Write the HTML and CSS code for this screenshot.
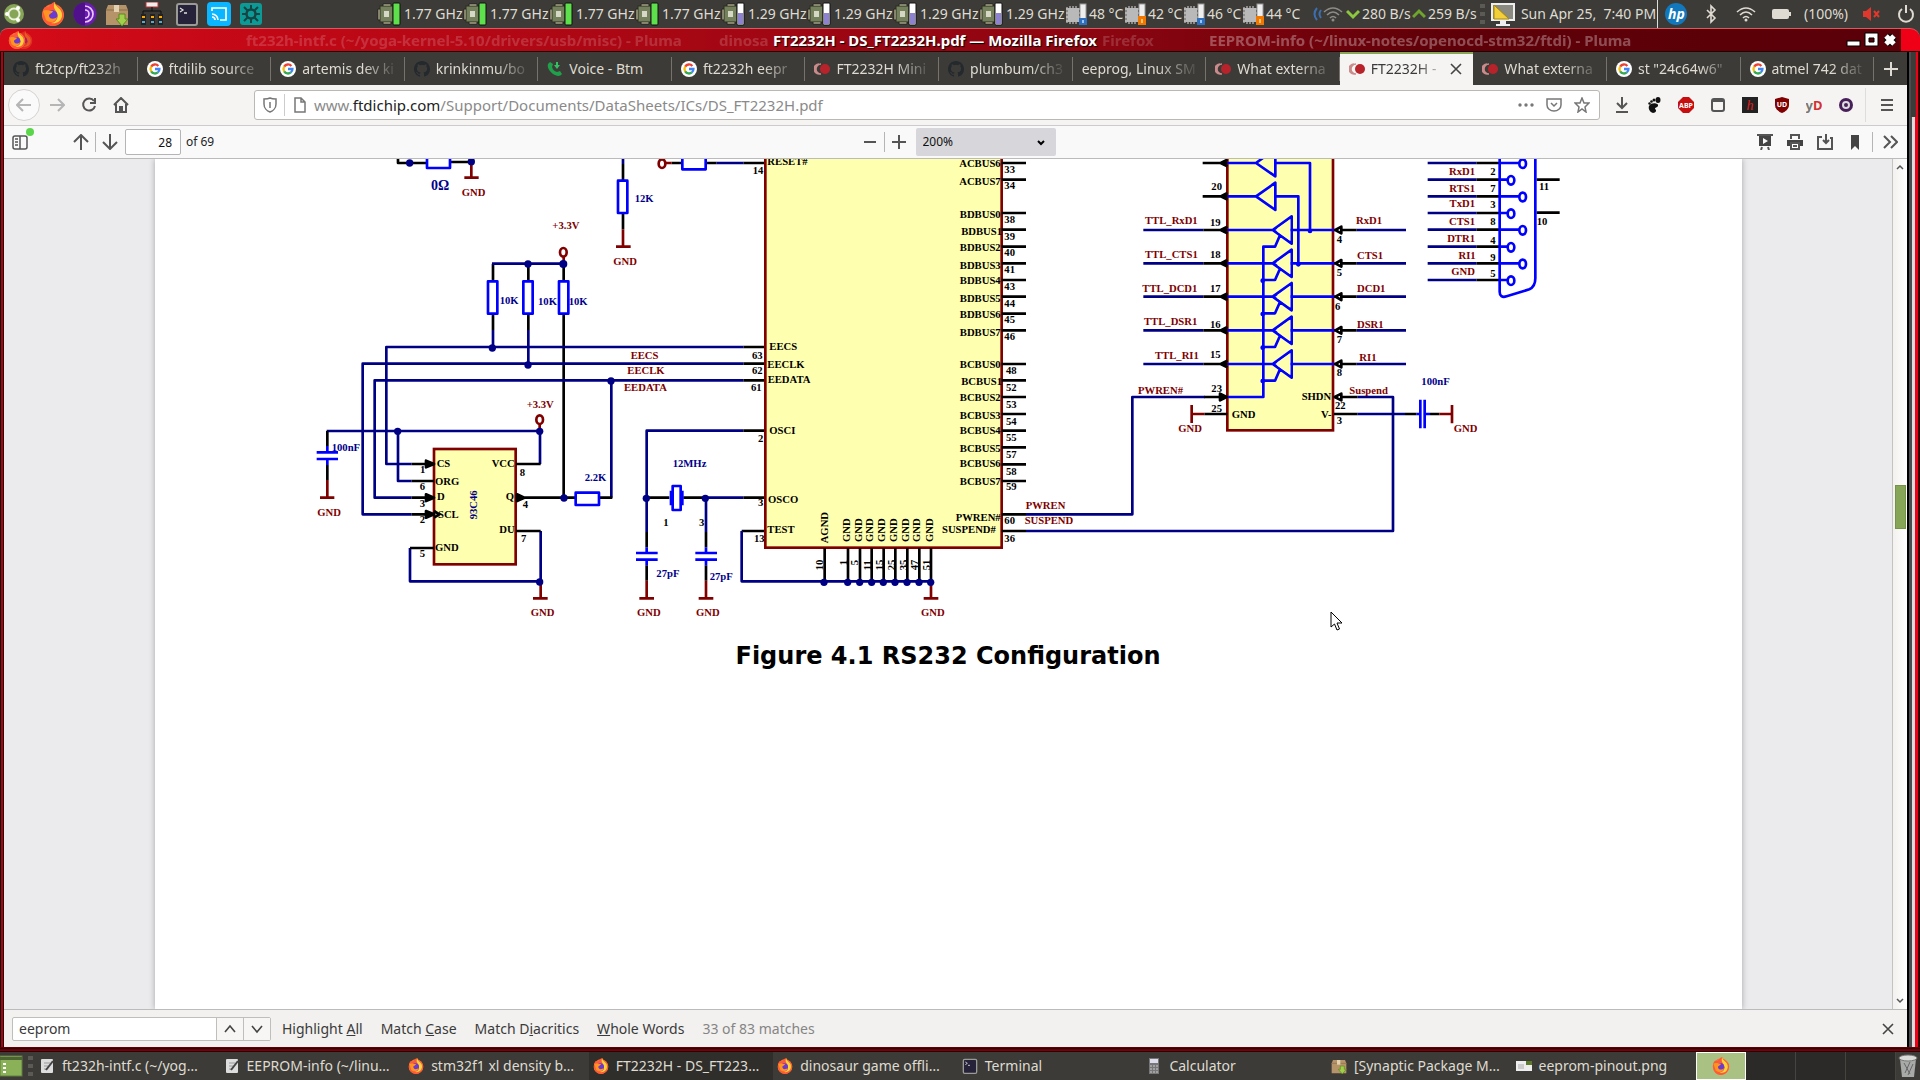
FILE: index.html
```html
<!DOCTYPE html>
<html lang="en">
<head>
<meta charset="utf-8">
<title>FT2232H - DS_FT2232H.pdf — Mozilla Firefox</title>
<link rel="stylesheet" href="styles.css">
</head>
<body>
<svg class="defs" aria-hidden="true">
  <defs>
    <symbol id="fox" viewBox="0 0 24 24"><circle cx="12" cy="13" r="11" fill="#ff7139"/><path d="M2 8C4 3 6 6 8 5C10 1 13 0 14 0C14 4 20 5 22 10C24 19 17 24 12 24C5 24 0 18 2 8Z" fill="#ff5a36"/><path d="M14 0C13 5 22 6 21 14C20 20 15 22 10 21C17 20 18 14 15 9C13 6 12 4 14 0Z" fill="#ffd43a"/><circle cx="11" cy="13.500" r="5.500" fill="#6a3bd0"/><path d="M2 9C5 7 8 9 12 9C11 12 8 11 8 14C9 18 14 17 16 15C15 21 8 21 5 18Z" fill="#ff9420"/></symbol>
    <symbol id="google" viewBox="0 0 18 18"><circle cx="9" cy="9" r="9" fill="#fff"/><g fill="none" stroke-width="2.600"><path d="M12.800 5.600A5 5 0 0 0 4.700 6.400" stroke="#ea4335"/><path d="M4.700 6.400A5 5 0 0 0 4.700 11.600" stroke="#fbbc05"/><path d="M4.700 11.600A5 5 0 0 0 12.200 12.900" stroke="#34a853"/><path d="M12.200 12.900A5 5 0 0 0 14 9H9" stroke="#4285f4"/></g></symbol>
    <symbol id="github" viewBox="0 0 16 16"><path fill="#24292e" d="M8 0C3.580 0 0 3.580 0 8c0 3.540 2.290 6.530 5.470 7.590.4.070.55-.17.55-.38v-1.490c-2.010.37-2.530-.49-2.690-.94-.09-.23-.48-.94-.82-1.130-.28-.15-.68-.52-.01-.53.63-.01 1.080.58 1.230.82.72 1.210 1.870.87 2.330.66.070-.52.28-.87.51-1.070-1.780-.2-3.640-.89-3.640-3.950 0-.87.31-1.590.82-2.150-.08-.2-.36-1.020.08-2.120 0 0 .67-.21 2.200.82a7.600 7.600 0 0 1 4 0c1.530-1.040 2.200-.82 2.200-.82.44 1.100.16 1.920.08 2.120.51.56.82 1.270.82 2.150 0 3.070-1.870 3.750-3.650 3.950.29.25.54.73.54 1.480v2.200c0 .21.15.46.55.38A8 8 0 0 0 16 8c0-4.420-3.580-8-8-8z"/></symbol>
    <symbol id="voice" viewBox="0 0 16 16"><path d="M3 1L6 3L5 6C6 9 7 10 10 11L13 10L15 13C13 16 9 15 6 13C2 10 0 6 1 3Z" fill="#1fa04a"/><path d="M9 1V4H7L10 8L13 4H11V1ZM12 5L15 9" fill="#35c063"/></symbol>
    <symbol id="mouser" viewBox="0 0 16 12"><path d="M5 1A5 5 0 0 0 5 11M3 2A5 5 0 0 0 3 10M7 1A5 5 0 0 0 7 11" fill="none" stroke="#c98b8b" stroke-width="1.500"/><circle cx="11" cy="6" r="5" fill="#b8232b"/></symbol>
    <symbol id="cpu" viewBox="0 0 24 24"><path d="M6 2H14V22H6ZM1 7H18V18H1Z" fill="#e6e2b8" stroke="#222" /><rect x="3" y="4" width="13" height="16" fill="#75805c" stroke="#2b2f20"/><rect x="7" y="9" width="5" height="6" fill="#d5d8c4"/></symbol>
    <symbol id="cpu-high" viewBox="0 0 24 24"><use href="#cpu"/><rect x="16" y="1" width="7" height="22" rx="1" fill="#5ee04c" stroke="#111"/></symbol>
    <symbol id="cpu-low" viewBox="0 0 24 24"><use href="#cpu"/><rect x="16" y="1" width="7" height="22" rx="1" fill="#fff" stroke="#111"/><path d="M17 11H22V22H17Z" fill="#8d82d0"/></symbol>
    <symbol id="chip" viewBox="0 0 24 24"><path d="M2 5V21M5 4V22M8 4V22M11 4V22M1 7H15M1 11H15M1 15H15M1 19H15" stroke="#ddd"/><rect x="3" y="6" width="11" height="14" fill="#b9b9b9"/><rect x="15" y="2" width="6" height="20" fill="#eee" stroke="#999"/></symbol>
    <symbol id="temp-cool" viewBox="0 0 24 24"><use href="#chip"/><path d="M14 16H22V23H14Z" fill="#2f6fc0"/><path d="M17 18H19V21H17Z" fill="#9cc4f0"/></symbol>
    <symbol id="temp-warm" viewBox="0 0 24 24"><use href="#chip"/><path d="M14 14H22V23H14Z" fill="#f07800"/><path d="M17 17H19V21H17Z" fill="#ffc070"/></symbol>
    <symbol id="wifi" viewBox="0 0 20 16"><g fill="none" stroke="currentColor" stroke-width="1.600"><path d="M1 6Q10 -2 19 6M4 9Q10 3 16 9M7 12Q10 9 13 12"/></g><circle cx="10" cy="14" r="1.500" fill="currentColor"/></symbol>
    <symbol id="doc" viewBox="0 0 16 16"><rect x="2" y="1" width="12" height="14" rx="1" fill="#ddd"/><path d="M5 5H11M5 8H9M5 11H8" stroke="#999"/><path d="M7 12L14 3" stroke="#444" stroke-width="2"/></symbol>
    <symbol id="package" viewBox="0 0 24 24"><path d="M3 3H21L23 8V23H1V8Z" fill="#b5946a"/><path d="M1 8H23" stroke="#8b6c48"/><path d="M9 3H14V10H9Z" fill="#e3d1b0"/><path d="M14 12H20V17H23L17 24L11 17H14Z" fill="#9fcf4b" stroke="#5a8a1c"/></symbol>
    <symbol id="term" viewBox="0 0 24 24"><rect x="2" y="2" width="20" height="21" rx="2" fill="#25223a" stroke="#9a9a96" stroke-width="2"/><path d="M5 6L8 8L5 10M9 11H12" fill="none" stroke="#ddd" stroke-width="1.300"/></symbol>
  </defs>
</svg>

<header class="panel">
  <nav class="launchers" aria-label="Launchers">
    <svg class="i24" viewBox="0 0 24 24"><circle cx="12" cy="12" r="10" fill="#87a556"/><circle cx="12" cy="12" r="5.500" fill="none" stroke="#e8f0d8" stroke-width="2"/><circle cx="5" cy="12" r="2" fill="#fff"/><circle cx="16" cy="6" r="2" fill="#fff"/><circle cx="16" cy="18" r="2" fill="#fff"/></svg>
    <svg class="i24 push"><use href="#fox"/></svg>
    <svg class="i24" viewBox="0 0 24 24"><circle cx="12" cy="12" r="11.500" fill="#6a1bb0"/><path d="M12 4A8 8 0 0 1 12 20M12 8A4 4 0 0 1 12 16" fill="none" stroke="#e7c9ff" stroke-width="1.700"/><path d="M12 .5A11.500 11.500 0 0 0 12 23.500Z" fill="#50108c"/></svg>
    <svg class="i24"><use href="#package"/></svg>
    <svg class="i24 wide" viewBox="0 0 24 24"><rect x="6" y="0" width="12" height="5" fill="#eee" stroke="#b33"/><path d="M12 5V9M3 12V9H21V12" stroke="#111" fill="none"/><path d="M1 12H6V23H1ZM10 12H15V23H10ZM18 12H23V23H18Z" fill="#222"/><path d="M2 15H5M11 15H14M19 15H22" stroke="#fa0" stroke-width="2"/><path d="M2 20H5M11 20H14M19 20H22" stroke="#5ac" stroke-width="2"/></svg>
    <svg class="i24"><use href="#term"/></svg>
    <svg class="i24" viewBox="0 0 24 24"><rect width="24" height="24" rx="4" fill="#0ab6ff"/><path d="M5 9V6H19V18H13M5 12A6 6 0 0 1 11 18M5 15A3 3 0 0 1 8 18" fill="none" stroke="#fff" stroke-width="1.700"/></svg>
    <svg class="i24" viewBox="0 0 24 24"><rect x="1" y="1" width="22" height="22" rx="3" fill="#0c9a96"/><circle cx="12" cy="12" r="4.500" fill="none" stroke="#164443" stroke-width="2.500"/><path d="M12 3V8M12 16V21M3 12H8M16 12H21M5 5L9 9M19 5L15 9M5 19L9 15M19 19L15 15" stroke="#164443" stroke-width="2"/></svg>
  </nav>
  <div class="meters">
    <span class="cpu"><svg class="i24"><use href="#cpu-high"/></svg>1.77 GHz</span>
    <span class="cpu"><svg class="i24"><use href="#cpu-high"/></svg>1.77 GHz</span>
    <span class="cpu"><svg class="i24"><use href="#cpu-high"/></svg>1.77 GHz</span>
    <span class="cpu"><svg class="i24"><use href="#cpu-high"/></svg>1.77 GHz</span>
    <span class="cpu"><svg class="i24"><use href="#cpu-low"/></svg>1.29 GHz</span>
    <span class="cpu"><svg class="i24"><use href="#cpu-low"/></svg>1.29 GHz</span>
    <span class="cpu"><svg class="i24"><use href="#cpu-low"/></svg>1.29 GHz</span>
    <span class="cpu"><svg class="i24"><use href="#cpu-low"/></svg>1.29 GHz</span>
    <span class="temp"><svg class="i24"><use href="#temp-cool"/></svg>48 °C</span>
    <span class="temp"><svg class="i24"><use href="#temp-warm"/></svg>42 °C</span>
    <span class="temp"><svg class="i24"><use href="#temp-cool"/></svg>46 °C</span>
    <span class="temp"><svg class="i24"><use href="#temp-warm"/></svg>44 °C</span>
    <span class="net first"><svg class="netwifi" viewBox="0 0 32 20"><path d="M5 4Q0 10 5 16M9 6Q6 10 9 14" fill="none" stroke="#3c6fb0" stroke-width="2"/><use href="#wifi" x="11" y="2" width="20" height="16"/></svg><svg class="arr" viewBox="0 0 14 12"><path d="M1 3L7 9L13 3" fill="none" stroke="#8dc63f" stroke-width="3"/></svg>280 B/s</span>
    <span class="net"><svg class="arr" viewBox="0 0 14 12"><path d="M1 9L7 3L13 9" fill="none" stroke="#6fa52c" stroke-width="3"/></svg>259 B/s</span>
    <i class="grip"></i>
    <svg class="i24" viewBox="0 0 24 24"><rect x="1" y="2" width="22" height="16" fill="#8a8a80" stroke="#eee" stroke-width="2"/><path d="M3 3V17H18Z" fill="#f3cf3a" stroke="#a8860c"/><path d="M9 19H15V22H19V24H5V22H9Z" fill="#eee"/></svg>
    <time class="clock">Sun Apr 25,&nbsp; 7:40 PM</time>
  </div>
  <div class="tray">
    <svg class="i24" viewBox="0 0 24 24"><circle cx="12" cy="12" r="11" fill="#1178bd"/><text class="hp" x="4" y="17">hp</text></svg>
    <svg class="i24" viewBox="0 0 24 24"><path d="M8 8L16 16L12 20V4L16 8L8 16" fill="none" stroke="#dfdbd2" stroke-width="1.600"/></svg>
    <svg class="i24" viewBox="-2 -4 24 24"><use href="#wifi" width="20" height="16"/></svg>
    <svg class="i24" viewBox="0 0 24 24"><rect x="3" y="7" width="17" height="10" rx="2" fill="#dfdbd2"/><rect x="20" y="10" width="2" height="4" fill="#dfdbd2"/></svg>
    <span>(100%)</span>
    <svg class="i24" viewBox="0 0 24 24"><path d="M4 9H7L12 5V19L7 15H4Z" fill="#e0382c"/><path d="M15 9L20 15M20 9L15 15" stroke="#e0382c" stroke-width="2"/></svg>
    <svg class="i24" viewBox="0 0 24 24"><path d="M8 7A7 7 0 1 0 16 7M12 3V11" fill="none" stroke="#dfdbd2" stroke-width="2"/></svg>
  </div>
</header>

<div class="titlebar">
  <svg class="ghostfox" width="18" height="18"><use href="#fox"/></svg>
  <svg class="appicon" width="18" height="18"><use href="#fox"/></svg>
  <span class="ghost g1">ft232h-intf.c (~/yoga-kernel-5.10/drivers/usb/misc) - Pluma</span>
  <span class="ghost g2">dinosa</span>
  <span class="ghost g3">Firefox</span>
  <span class="ghost g4">EEPROM-info (~/linux-notes/openocd-stm32/ftdi) - Pluma</span>
  <h1>FT2232H - DS_FT2232H.pdf — Mozilla Firefox</h1>
  <div class="winbtns">
    <button aria-label="Minimize"><svg width="16" height="16" viewBox="0 0 16 16"><rect x="1" y="9" width="13" height="5" fill="#fff" stroke="#000"/></svg></button>
    <button aria-label="Maximize"><svg width="16" height="16" viewBox="0 0 16 16"><path d="M1 1H14V14H1ZM5 6V10H10V6Z" fill="#fff" stroke="#000" fill-rule="evenodd"/></svg></button>
    <button aria-label="Close window"><svg width="16" height="16" viewBox="0 0 16 16"><path d="M4 4L12 12M12 4L4 12" stroke="#000" stroke-width="7"/><path d="M4 4L12 12M12 4L4 12" stroke="#fff" stroke-width="5"/></svg></button>
  </div>
</div>

<div class="frame">
<main class="window">
  <div class="tabs">
    <a class="tab" href="#"><svg><use href="#github"/></svg><span>ft2tcp/ft232h</span></a>
    <a class="tab" href="#"><svg><use href="#google"/></svg><span>ftdilib source</span></a>
    <a class="tab" href="#"><svg><use href="#google"/></svg><span>artemis dev ki</span></a>
    <a class="tab" href="#"><svg><use href="#github"/></svg><span>krinkinmu/bo</span></a>
    <a class="tab" href="#"><svg><use href="#voice"/></svg><span class="whole">Voice - Btm</span></a>
    <a class="tab" href="#"><svg><use href="#google"/></svg><span>ft2232h eepr</span></a>
    <a class="tab" href="#"><svg><use href="#mouser"/></svg><span>FT2232H Mini</span></a>
    <a class="tab" href="#"><svg><use href="#github"/></svg><span>plumbum/ch3</span></a>
    <a class="tab" href="#"><span>eeprog, Linux SM</span></a>
    <a class="tab" href="#"><svg><use href="#mouser"/></svg><span>What externa</span></a>
    <a class="tab active" href="#"><svg><use href="#mouser"/></svg><span>FT2232H -</span><svg class="x" viewBox="0 0 14 14"><path d="M2 2L12 12M12 2L2 12" stroke="#444" stroke-width="1.600"/></svg></a>
    <a class="tab" href="#"><svg><use href="#mouser"/></svg><span>What externa</span></a>
    <a class="tab" href="#"><svg><use href="#google"/></svg><span>st "24c64w6"</span></a>
    <a class="tab" href="#"><svg><use href="#google"/></svg><span>atmel 742 dat</span></a>
    <button class="newtab" aria-label="New tab"><svg width="16" height="16" viewBox="0 0 16 16"><path d="M8 1V15M1 8H15" stroke="#dfdbd2" stroke-width="2"/></svg></button>
  </div>

  <div class="navbar">
    <div class="navbtns">
      <button class="back" aria-label="Back"><svg viewBox="0 0 16 16"><path d="M15 8H1M7 2L1 8L7 14"/></svg></button>
      <button class="dim" aria-label="Forward"><svg viewBox="0 0 16 16"><path d="M1 8H15M9 2L15 8L9 14"/></svg></button>
      <button aria-label="Reload"><svg viewBox="0 0 16 16"><path d="M13 4A6 6 0 1 0 14 9M14 1V6H9"/></svg></button>
      <button aria-label="Home"><svg viewBox="0 0 16 16"><path d="M1 8L8 1L15 8M3 7V15H13V7M7 15V10H9V15"/></svg></button>
    </div>
    <div class="urlbar">
      <svg viewBox="0 0 16 16" class="ic"><path d="M8 1C10 2 12 2 14 2V7C14 11 11 14 8 15C5 14 2 11 2 7V2C4 2 6 2 8 1ZM8 5V11"/></svg>
      <i></i>
      <svg viewBox="0 0 16 16" class="ic"><path d="M3 1H9L13 5V15H3ZM9 1V5H13"/></svg>
      <div class="url" role="textbox" aria-label="Address">www.<b>ftdichip.com</b>/Support/Documents/DataSheets/ICs/DS_FT2232H.pdf</div>
      <svg viewBox="0 0 16 16" class="ic"><g fill="#777" stroke="none"><circle cx="2" cy="8" r="1.700"/><circle cx="8" cy="8" r="1.700"/><circle cx="14" cy="8" r="1.700"/></g></svg>
      <svg viewBox="0 0 16 16" class="ic"><path d="M1 2H15V8A7 6 0 0 1 1 8ZM5 6L8 9L11 6"/></svg>
      <svg viewBox="0 0 16 16" class="ic"><path d="M8 1L10 6L15 6L11 10L12 15L8 12L4 15L5 10L1 6L6 6Z"/></svg>
    </div>
    <div class="exts">
      <button aria-label="Downloads"><svg viewBox="0 0 16 16"><path d="M8 0V11M3 6L8 11L13 6M2 15H14"/></svg></button>
      <button aria-label="GNOME Shell"><svg viewBox="0 0 16 16"><g fill="#111" stroke="none"><ellipse cx="12" cy="3" rx="2.500" ry="3"/><circle cx="8" cy="3" r="1.500"/><circle cx="5.500" cy="4.500" r="1.300"/><circle cx="3.500" cy="6.500" r="1.200"/><path d="M3 9C5 5 13 6 12 9C11 11 9 10 9 12C11 13 10 16 7 16C4 15 2 12 3 9Z"/></g></svg></button>
      <button aria-label="Adblock Plus"><svg viewBox="0 0 16 16"><path d="M5 0H11L16 5V11L11 16H5L0 11V5Z" fill="#c70d0d" stroke="none"/><text class="abp" x="8" y="11">ABP</text></svg></button>
      <button aria-label="Container"><svg viewBox="0 0 16 16"><rect x="2" y="2" width="12" height="12" rx="2"/><path d="M2 4H14"/></svg></button>
      <button aria-label="Hypothesis"><svg viewBox="0 0 16 16"><rect width="16" height="16" fill="#222" stroke="none"/><text class="hext" x="8" y="13">h</text></svg></button>
      <button aria-label="uBlock Origin"><svg viewBox="0 0 16 16"><path d="M8 0L15 2V8C15 12 11 15 8 16C5 15 1 12 1 8V2Z" fill="#800000" stroke="none"/><text class="ub" x="8" y="10">UD</text></svg></button>
      <button aria-label="yD"><svg viewBox="0 0 16 16"><text class="yd" x="8" y="13">y<tspan fill="#d43030">D</tspan></text></svg></button>
      <button aria-label="Tor"><svg viewBox="0 0 16 16"><circle cx="8" cy="8" r="7" fill="#47205a" stroke="none"/><circle cx="8" cy="8" r="3" stroke="#ddd"/></svg></button>
    </div>
    <button class="menu" aria-label="Menu"><svg viewBox="0 0 16 16"><path d="M2 3H14M2 8H14M2 13H14"/></svg></button>
  </div>

  <div class="pdfbar">
    <div class="left">
      <button class="side" aria-label="Toggle sidebar"><svg viewBox="0 0 16 16"><rect x="1" y="2" width="14" height="13" rx="2"/><path d="M8 2V15M3 5H6M3 8H6M3 11H6"/></svg><em></em></button>
      <button aria-label="Previous page"><svg viewBox="0 0 16 16"><path d="M8 16V1M1 8L8 1L15 8"/></svg></button>
      <i></i>
      <button aria-label="Next page"><svg viewBox="0 0 16 16"><path d="M8 0V15M1 8L8 15L15 8"/></svg></button>
      <input class="pageno" type="text" value="28" aria-label="Page">
      <span>of 69</span>
    </div>
    <div class="mid">
      <button aria-label="Zoom out"><svg viewBox="0 0 16 16"><path d="M2 8H14"/></svg></button>
      <i></i>
      <button aria-label="Zoom in"><svg viewBox="0 0 16 16"><path d="M1 8H15M8 1V15"/></svg></button>
      <div class="zoom"><select aria-label="Zoom"><option>200%</option></select><svg viewBox="0 0 8 6"><path d="M1 1L4 4L7 1" fill="none" stroke="#000" stroke-width="2"/></svg></div>
    </div>
    <div class="right">
      <button aria-label="Presentation mode"><svg viewBox="0 0 16 16"><path d="M0 1H16M4 16L5 13M12 16L11 13"/><path d="M2 2H14V12H2ZM6 4V10L11 7Z" fill="#444" stroke="none" fill-rule="evenodd"/></svg></button>
      <button aria-label="Print"><svg viewBox="0 0 16 16"><path d="M4 5V1H12V5"/><path d="M0 6H16V12H0Z" fill="#444" stroke="none"/><path d="M4 9H12V15H4Z" fill="#fff"/><path d="M6 12H10"/></svg></button>
      <button aria-label="Save"><svg viewBox="0 0 16 16"><path d="M5 3H1V15H15V4H13M9 0V9M6 6L9 9L12 6"/></svg></button>
      <button aria-label="Bookmark"><svg viewBox="0 0 16 16"><path d="M4 1H12V16L8 12L4 16Z" fill="#444" stroke="none"/></svg></button>
      <i></i>
      <button aria-label="Tools"><svg viewBox="0 0 16 16"><path d="M2 2L8 8L2 14M9 2L15 8L9 14"/></svg></button>
    </div>
  </div>

  <div class="viewer">
    <div class="canvas">
      <figure class="sheet">
        <svg class="schematic" viewBox="465 477 4761 1428" role="img" aria-label="FT2232H RS232 schematic">
          <!-- pull-ups, reset and reference resistors -->
          <g transform="translate(900 450)">
            <path class="k" d="M294 20V39H380M450 36H514M969 42V92M969 190V238M1115 39H1146M1220 39H1250M1330 39H1400M579 341V392M685 341V392M791 341V392M579 494V540M685 494V540M791 494V1043M1330 591H1400M1330 641H1400M1330 691H1400"/>
            <path class="n" d="M969 20V42M1250 39H1330M576 341H790M579 540V594M685 540V645M1330 591H259V942H335M1330 641H188V1093H335M1330 691H224V1043H335M934 693V1043"/>
            <path class="m" d="M514 42V82M493 83H536M969 238V290M948 290H992M1098 39H1115M791 320V335"/>
            <path class="b" d="M381 20V54H450V20M1147 20V58H1217V20M954 92H982V189H954ZM564 394H592V491H564ZM670 394H698V491H670ZM777 394H805V491H777Z"/>
            <g class="m"><ellipse cx="1086" cy="41" rx="10" ry="13"/><ellipse cx="790" cy="307" rx="10" ry="13"/></g>
            <g class="dot"><circle cx="329" cy="39" r="11"/><circle cx="514" cy="35" r="11"/><circle cx="684" cy="342" r="11"/><circle cx="790" cy="342" r="12"/><circle cx="577" cy="594" r="11"/><circle cx="684" cy="645" r="11"/><circle cx="933" cy="693" r="11"/></g>
            <g class="tn"><text class="ohm" x="393" y="120">0Ω</text><text x="1004" y="157">12K</text><text x="599" y="461">10K</text><text x="714" y="464">10K</text><text x="806" y="464">10K</text></g>
            <g class="tm"><text x="485" y="137">GND</text><text x="940" y="345">GND</text><text x="757" y="237">+3.3V</text><text x="992" y="627">EECS</text><text x="982" y="671">EECLK</text><text x="972" y="722">EEDATA</text></g>
            <g class="tk"><text x="1358" y="72">14</text><text x="1356" y="626">63</text><text x="1356" y="671">62</text><text x="1353" y="722">61</text></g>
          </g>
          <!-- 93C46 EEPROM and crystal -->
          <g transform="translate(900 1140)">
            <rect class="ic-body" x="402" y="207" width="245" height="346"/>
            <path class="n" d="M80 153H720V252M294 153V303H335M330 504V604H722V453M1330 152H1040V456M1217 353H1330M1218 353V456"/>
            <path class="k" d="M82 153V198M82 255V300M335 252H402M335 303H402M335 353H402M335 403H402M330 504H402M648 252H722M648 453H722M648 353H825M900 353H937M1040 353H1108M1150 353H1217M1330 152H1400M1330 353H1400M1325 453H1400M1040 456V502M1218 456V502M1040 556V602M1218 556V602M378 242L402 252L378 262ZM378 343L402 353L378 363ZM378 393L402 403L378 413ZM402 393L418 403L402 413M651 343L673 353L651 363Z"/>
            <path class="m" d="M82 300V353M60 353H103M722 606V655M699 655H743M1040 602V655M1018 655H1062M1218 602V655M1196 655H1240M719 132V145"/>
            <path class="b" d="M82 198V217M50 217H114M50 237H114M82 237V255M827 338H897V375H827ZM1113 332V376M1118 318H1142V390H1118ZM1147 332V376M1040 502V519M1008 519H1073M1008 539H1073M1040 539V556M1218 502V519M1186 519H1251M1186 539H1251M1218 539V556"/>
            <g class="m"><ellipse cx="719" cy="119" rx="10" ry="13"/></g>
            <g class="dot"><circle cx="293" cy="154" r="11"/><circle cx="719" cy="154" r="11"/><circle cx="719" cy="606" r="11"/><circle cx="792" cy="354" r="11"/><circle cx="1039" cy="355" r="11"/><circle cx="1216" cy="355" r="11"/></g>
            <g class="tn"><text x="95" y="214">100nF</text><text x="854" y="303">2.2K</text><text x="1118" y="260">12MHz</text><text x="1069" y="592">27pF</text><text x="1229" y="600">27pF</text><text transform="translate(530 418) rotate(-90)">93C46</text></g>
            <g class="tm"><text x="52" y="407">GND</text><text x="692" y="707">GND</text><text x="1011" y="707">GND</text><text x="1188" y="707">GND</text><text x="680" y="84">+3.3V</text></g>
            <g class="tk"><text x="410" y="261">CS</text><text x="405" y="315">ORG</text><text x="411" y="361">D</text><text x="414" y="414">SCL</text><text x="405" y="513">GND</text><text x="575" y="261">VCC</text><text x="617" y="360">Q</text><text x="598" y="459">DU</text><text x="360" y="278">1</text><text x="359" y="329">6</text><text x="359" y="382">3</text><text x="359" y="429">2</text><text x="359" y="531">5</text><text x="659" y="287">8</text><text x="668" y="385">4</text><text x="663" y="485">7</text><text x="1090" y="437">1</text><text x="1197" y="437">3</text><text x="1374" y="186">2</text><text x="1374" y="378">3</text><text x="1362" y="486">13</text></g>
          </g>
          <!-- FT2232H body -->
          <g transform="translate(2190 450)">
            <rect class="ic-body" x="106" y="-40" width="709" height="1233"/>
            <path class="k" d="M815 39H888M815 89H888M815 189H888M815 239H888M815 290H888M815 340H888M815 390H888M815 440H888M815 491H888M815 541H888M815 642H888M815 691H888M815 741H888M815 792H888M815 842H888M815 892H888M815 943H888M815 993H888"/>
            <g class="tk end"><text x="812" y="51">ACBUS6</text><text x="812" y="105">ACBUS7</text><text x="812" y="204">BDBUS0</text><text x="816" y="255">BDBUS1</text><text x="812" y="303">BDBUS2</text><text x="812" y="357">BDBUS3</text><text x="812" y="402">BDBUS4</text><text x="812" y="456">BDBUS5</text><text x="812" y="504">BDBUS6</text><text x="812" y="558">BDBUS7</text><text x="812" y="654">BCBUS0</text><text x="816" y="704">BCBUS1</text><text x="812" y="753">BCBUS2</text><text x="812" y="807">BCBUS3</text><text x="812" y="852">BCBUS4</text><text x="812" y="906">BCBUS5</text><text x="812" y="951">BCBUS6</text><text x="812" y="1005">BCBUS7</text></g>
            <g class="tk"><text x="823" y="68">33</text><text x="823" y="116">34</text><text x="823" y="218">38</text><text x="823" y="270">39</text><text x="823" y="317">40</text><text x="823" y="368">41</text><text x="823" y="419">43</text><text x="823" y="471">44</text><text x="823" y="518">45</text><text x="823" y="570">46</text><text x="828" y="671">48</text><text x="828" y="722">52</text><text x="828" y="773">53</text><text x="828" y="825">54</text><text x="828" y="873">55</text><text x="828" y="924">57</text><text x="828" y="974">58</text><text x="828" y="1021">59</text><text x="112" y="46">RESET#</text><text x="118" y="600">EECS</text><text x="112" y="654">EECLK</text><text x="113" y="699">EEDATA</text></g>
          </g>
          <g transform="translate(2190 1140)">
            <path class="n" d="M35 453V604H602M888 403H1207V51H1425M888 453H1989V51H1882"/>
            <path class="k" d="M284 505V604M354 505V604M390 505V604M425 505V604M461 505V604M496 505V604M532 505V604M568 505V604M603 505V604M815 403H888M815 453H888"/>
            <path class="m" d="M603 606V655M581 655H625"/>
            <g class="dot"><circle cx="282" cy="607" r="11"/><circle cx="353" cy="607" r="11"/><circle cx="389" cy="607" r="11"/><circle cx="425" cy="607" r="11"/><circle cx="460" cy="607" r="11"/><circle cx="495" cy="607" r="11"/><circle cx="531" cy="607" r="11"/><circle cx="567" cy="607" r="11"/><circle cx="602" cy="607" r="11"/></g>
            <g class="tk"><text x="118" y="162">OSCI</text><text x="114" y="369">OSCO</text><text x="112" y="458">TEST</text><text x="677" y="422">PWREN#</text><text x="636" y="458">SUSPEND#</text><text x="823" y="431">60</text><text x="823" y="485">36</text>
              <text transform="translate(294 490) rotate(-90)">AGND</text><text transform="translate(359 486) rotate(-90)">GND</text><text transform="translate(395 486) rotate(-90)">GND</text><text transform="translate(428 486) rotate(-90)">GND</text><text transform="translate(464 486) rotate(-90)">GND</text><text transform="translate(500 486) rotate(-90)">GND</text><text transform="translate(536 486) rotate(-90)">GND</text><text transform="translate(571 486) rotate(-90)">GND</text><text transform="translate(608 486) rotate(-90)">GND</text>
              <text transform="translate(279 571) rotate(-90)">10</text><text transform="translate(351 556) rotate(-90)">1</text><text transform="translate(385 556) rotate(-90)">5</text><text transform="translate(423 571) rotate(-90)">11</text><text transform="translate(458 571) rotate(-90)">15</text><text transform="translate(494 571) rotate(-90)">25</text><text transform="translate(530 571) rotate(-90)">35</text><text transform="translate(565 571) rotate(-90)">47</text><text transform="translate(600 571) rotate(-90)">51</text></g>
            <g class="tm"><text x="887" y="387">PWREN</text><text x="884" y="431">SUSPEND</text><text x="573" y="707">GND</text></g>
          </g>
          <!-- RS232 level shifter -->
          <g transform="translate(3360 450)">
            <rect class="ic-body" x="322" y="-40" width="317" height="881"/>
            <path class="n" d="M70 240H250M70 340H250M70 440H250M70 541H250M70 642H250M710 240H858M710 340H858M710 440H858M710 541H858M710 642H858M712 792H855M923 39H1070M923 89H1070M923 139H1070M923 189H1070M923 239H1070M923 290H1070M923 340H1070M923 390H1070"/>
            <path class="b" d="M322 39H408M466 -3V79L408 39ZM466 39H570V243M322 139H408M466 98V180L408 139ZM466 139H535V343M322 240H515M515 199V281L458 240ZM322 340H515M515 299V381L458 340ZM322 440H515M515 399V481L458 440ZM322 541H515M515 500V582L458 541ZM322 642H515M515 601V683L458 642ZM515 240H645M515 340H645M515 440H645M515 541H645M515 642H645M322 741H430V290H465L480 256M430 390H465L480 356M430 490H465L480 456M430 591H465L480 557M430 692H465L480 658"/>
            <g class="bdot"><circle cx="570" cy="243" r="7"/><circle cx="535" cy="343" r="7"/><circle cx="428" cy="392" r="7"/><circle cx="428" cy="492" r="7"/><circle cx="428" cy="593" r="7"/><circle cx="428" cy="693" r="7"/></g>
            <g class="gap"><path d="M511 208V272L466 240ZM511 308V372L466 340ZM511 408V472L466 440ZM511 509V573L466 541ZM511 610V674L466 642Z"/></g>
            <path class="k" d="M248 39H322M248 139H322M250 240H322M250 340H322M250 440H322M250 541H322M250 642H322M253 741H322M253 792H322M664 240H710M664 340H710M664 440H710M664 541H710M664 642H710M664 741H712M642 792H712M855 792H890M930 792H958M322 29L302 39L322 49M322 129L302 139L322 149M322 230L302 240L322 250M322 330L302 340L322 350M322 430L302 440L322 450M322 531L302 541L322 551M322 632L302 642L322 652M300 731L320 741L300 751ZM664 230L646 240L664 250ZM664 330L646 340L664 350ZM664 430L646 440L664 450ZM664 531L646 541L664 551ZM664 632L646 642L664 652ZM664 731L644 741L664 751ZM1070 39H1139M1070 89H1139M1070 139H1139M1070 189H1139M1070 239H1139M1070 290H1139M1070 340H1139M1070 390H1139M1250 89H1319M1250 188H1319"/>
            <path class="m" d="M215 765V819M215 792H253M958 792H996M996 765V820"/>
            <path class="b" d="M890 792H901M901 749V835M914 749V835M914 792H930M1139 20V425Q1139 445 1160 439L1228 418Q1246 410 1246 385V20M1139 39H1197M1139 89H1162M1139 139H1197M1139 189H1162M1139 239H1197M1139 290H1162M1139 340H1197M1139 390H1162"/>
            <g class="b"><ellipse cx="1208" cy="41" rx="10" ry="13"/><ellipse cx="1173" cy="91" rx="10" ry="13"/><ellipse cx="1208" cy="141" rx="10" ry="13"/><ellipse cx="1173" cy="191" rx="10" ry="13"/><ellipse cx="1208" cy="241" rx="10" ry="13"/><ellipse cx="1173" cy="292" rx="10" ry="13"/><ellipse cx="1208" cy="342" rx="10" ry="13"/><ellipse cx="1173" cy="392" rx="10" ry="13"/></g>
            <g class="tm"><text x="75" y="223">TTL_RxD1</text><text x="75" y="323">TTL_CTS1</text><text x="67" y="425">TTL_DCD1</text><text x="72" y="524">TTL_DSR1</text><text x="105" y="626">TTL_RI1</text><text x="54" y="731">PWREN#</text><text x="175" y="845">GND</text><text x="708" y="223">RxD1</text><text x="711" y="326">CTS1</text><text x="711" y="426">DCD1</text><text x="711" y="533">DSR1</text><text x="718" y="632">RI1</text><text x="688" y="731">Suspend</text><text x="1001" y="845">GND</text></g>
            <g class="tm end"><text x="1065" y="75">RxD1</text><text x="1065" y="126">RTS1</text><text x="1065" y="172">TxD1</text><text x="1065" y="225">CTS1</text><text x="1065" y="276">DTR1</text><text x="1067" y="327">RI1</text><text x="1065" y="375">GND</text></g>
            <g class="tn"><text x="904" y="705">100nF</text></g>
            <g class="tk"><text x="274" y="119">20</text><text x="270" y="227">19</text><text x="270" y="324">18</text><text x="270" y="425">17</text><text x="270" y="533">16</text><text x="270" y="625">15</text><text x="274" y="725">23</text><text x="274" y="786">25</text><text x="335" y="803">GND</text><text x="545" y="749">SHDN</text><text x="603" y="803">V-</text><text x="645" y="776">22</text><text x="650" y="822">3</text><text x="650" y="278">4</text><text x="650" y="377">5</text><text x="645" y="479">6</text><text x="650" y="578">7</text><text x="650" y="677">8</text><text x="1111" y="75">2</text><text x="1111" y="126">7</text><text x="1111" y="174">3</text><text x="1111" y="225">8</text><text x="1111" y="281">4</text><text x="1111" y="332">9</text><text x="1111" y="381">5</text><text x="1257" y="119">11</text><text x="1250" y="224">10</text></g>
          </g>
        </svg>
        <figcaption>Figure 4.1 RS232 Configuration</figcaption>
      </figure>
    </div>
    <div class="scroll"><svg viewBox="0 0 8 6"><path d="M1 5L4 2L7 5"/></svg><div class="track"><b></b></div><svg viewBox="0 0 8 6"><path d="M1 1L4 4L7 1"/></svg></div>
  </div>

  <div class="findbar">
    <div class="findbox"><input type="text" value="eeprom" aria-label="Find in page"><button aria-label="Previous match"><svg viewBox="0 0 12 12"><path d="M1 9L6 3L11 9"/></svg></button><button aria-label="Next match"><svg viewBox="0 0 12 12"><path d="M1 3L6 9L11 3"/></svg></button></div>
    <button class="opt">Highlight <u>A</u>ll</button>
    <button class="opt">Match <u>C</u>ase</button>
    <button class="opt">Match D<u>i</u>acritics</button>
    <button class="opt"><u>W</u>hole Words</button>
    <span class="count">33 of 83 matches</span>
    <button class="close" aria-label="Close find bar"><svg viewBox="0 0 12 12"><path d="M1 1L11 11M11 1L1 11"/></svg></button>
  </div>
</main>
</div>

<footer class="taskbar">
  <button class="desk" aria-label="Show desktop"><svg width="24" height="24" viewBox="0 0 24 24"><rect x="0" y="2" width="22" height="20" fill="#8bb158" stroke="#5f7c3a"/><path d="M0 3H22V6H0Z" fill="#4d6334"/><path d="M3 10H6M3 14H6M3 18H6" stroke="#fff" stroke-width="2"/></svg></button>
  <i class="grip"></i>
  <div class="tasks">
    <button><svg><use href="#doc"/></svg><span>ft232h-intf.c (~/yog…</span></button>
    <button><svg><use href="#doc"/></svg><span>EEPROM-info (~/linu…</span></button>
    <button><svg><use href="#fox"/></svg><span>stm32f1 xl density b…</span></button>
    <button class="on"><svg><use href="#fox"/></svg><span>FT2232H - DS_FT223…</span></button>
    <button><svg><use href="#fox"/></svg><span>dinosaur game offli…</span></button>
    <button><svg><use href="#term"/></svg><span>Terminal</span></button>
    <button><svg viewBox="0 0 16 16"><rect x="3" y="0" width="10" height="16" fill="#777"/><rect x="4" y="1" width="8" height="4" fill="#dde"/><path d="M4 8H12M4 11H12M4 14H12" stroke="#ccc" stroke-dasharray="2 1"/></svg><span>Calculator</span></button>
    <button><svg><use href="#package"/></svg><span>[Synaptic Package M…</span></button>
    <button><svg viewBox="0 0 16 16"><rect y="3" width="16" height="10" fill="#eee"/><path d="M10 3H16V7H10Z" fill="#5a7a2a"/><path d="M2 6H8V11H2Z" fill="#ccc"/></svg><span>eeprom-pinout.png</span></button>
  </div>
  <div class="spaces"><span class="cur"><svg width="18" height="18"><use href="#fox"/></svg></span><span></span><span></span><span></span></div>
  <svg class="i24" viewBox="0 0 24 24"><path d="M4 5H20L18 23H6Z" fill="#a8aaa8"/><ellipse cx="12" cy="4" rx="9" ry="3" fill="#d8dad8" stroke="#777"/><path d="M8 9L14 20M14 8L9 19M17 10L12 21" stroke="#666"/></svg>
</footer>
<svg class="pointer" width="14" height="20" viewBox="0 0 14 20"><path d="M1 1V16L4.500 13L7 19L9.500 18L7 12H12Z" fill="#fff" stroke="#000"/></svg>
</body>
</html>
```
FILE: styles.css
```css
* { box-sizing: border-box; }
body {
  margin: 0;
  height: 100vh;
  display: flex;
  flex-direction: column;
  overflow: hidden;
  background: #3c3b37;
  color: #dfdbd2;
  font: 14px/20px "Noto Sans", sans-serif;
  white-space: nowrap;
}
button { font: inherit; color: inherit; background: none; border: 0; padding: 0; display: flex; align-items: center; justify-content: center; }
svg { display: block; flex: none; }
.defs { position: absolute; width: 0; height: 0; }
.i24 { width: 24px; height: 24px; }

/* top panel */
.panel { height: 28px; flex: none; display: flex; align-items: center; justify-content: space-between; }
.launchers { display: flex; align-items: center; gap: 8px; padding-left: 2px; }
.launchers .push { margin-left: 7px; }
.launchers .wide { margin: 0 3px; }
.meters { display: flex; align-items: center; flex: none; margin-left: auto; margin-right: 4px; }
.cpu, .temp, .net { display: flex; align-items: center; }
.cpu { width: 86px; gap: 3px; }
.temp { width: 59px; }
.net { width: 67px; gap: 2px; }
.net.first { width: 100px; margin-left: 11px; }
.netwifi { width: 32px; height: 20px; color: #8e8c86; }
.arr { width: 14px; height: 12px; }
.grip { width: 5px; height: 20px; margin: 0 6px 0 1px; background: repeating-linear-gradient(#5b5a55 0 4px, transparent 4px 8px); }
.clock { width: 132px; margin-left: 6px; }
.tray { display: flex; align-items: center; gap: 11px; flex: none; height: 28px; padding: 0 2px 0 6px; border-left: 1px solid #ddd; }
.hp { font: italic bold 14px "Noto Sans", sans-serif; fill: #fff; }

/* window decoration */
.titlebar {
  position: relative;
  height: 24px;
  flex: none;
  display: flex;
  align-items: center;
  justify-content: flex-end;
  padding-right: 22px;
  border-top: 1px solid #d65a60;
  border-bottom: 1px solid #200;
  border-radius: 8px 10px 0 0;
  background: linear-gradient(90deg, #d60b18 0, #c20816 14%, #a30713 38%, #8a0510 58%, #5f0008 75%, #5a0008 99%, #f00016 99%);
}
.titlebar h1 { position: absolute; left: 0; right: 50px; top: 1px; margin: 0; text-align: center; font: bold 15px/20px "Noto Sans", sans-serif; color: #fff; text-shadow: 1px 1px 1px #000; }
.titlebar svg.appicon { position: absolute; left: 8px; top: 2px; }
.ghostfox { position: absolute; left: 15px; top: 2px; opacity: .4; }
.ghost { position: absolute; top: 1px; font-size: 15px; font-weight: bold; color: #fff; opacity: .16; }
.g1 { left: 246px; }
.g2 { left: 719px; }
.g3 { left: 1102px; }
.g4 { left: 1209px; opacity: .3; }
.winbtns { display: flex; gap: 2px; position: relative; }
.frame {
  flex: 1;
  min-height: 0;
  display: flex;
  padding: 0 13px 5px 4px;
  background:
    linear-gradient(#700008, #200 40%, #a00010 60%, #000) bottom / 100% 5px no-repeat,
    linear-gradient(#3c3b37, #3c3b37) right 4px top / 5px 65px no-repeat,
    linear-gradient(90deg, #000 2px, #4a4d50 2px 5px, #dcdcde 5px 8px, #f00016 8px 11px, #300 11px) right / 13px 100% no-repeat,
    linear-gradient(90deg, #000 1px, #b00010 1px 3px, #200 3px);
}
.window { flex: 1; min-width: 0; display: flex; flex-direction: column; background: #f5f4f2; color: #3a3a3a; }

/* tabs */
.tabs { display: flex; height: 33px; flex: none; background: #3c3b37; color: #dfdbd2; }
.tab { flex: 1 1 0; min-width: 0; display: flex; align-items: center; gap: 6px; padding: 0 10px 0 9px; color: inherit; text-decoration: none; position: relative; }
.tab svg { width: 16px; height: 16px; }
.tab span { flex: 1; overflow: hidden; -webkit-mask-image: linear-gradient(90deg, #000 65%, rgba(0, 0, 0, .1)); mask-image: linear-gradient(90deg, #000 65%, rgba(0, 0, 0, .1)); }
.tab .whole { -webkit-mask-image: none; mask-image: none; }
.tab::after { content: ""; position: absolute; right: 0; top: 5px; bottom: 4px; width: 1px; background: #75736c; }
.tab.active { background: #f5f4f2; color: #3a3a3a; border-top: 2px solid #87a556; padding-bottom: 2px; }
.tab.active::after { display: none; }
.tab.active .x { width: 14px; height: 14px; }
.newtab { width: 33px; }

/* navigation bar */
.navbar { display: flex; align-items: center; height: 41px; flex: none; border-bottom: 1px solid #ccc; }
.navbar button svg, .pdfbar button svg, .ic { width: 16px; height: 16px; fill: none; stroke: #555; stroke-width: 2; }
.navbtns { display: flex; align-items: center; width: 250px; padding-left: 4px; }
.navbtns button { width: 32px; height: 32px; }
.navbtns .back { border: 1px solid #d5d3d0; border-radius: 50%; background: #fafafa; margin-right: 1px; }
.navbtns .back svg, .navbtns .dim svg { stroke: #b5b5b5; }
.urlbar { flex: 1; height: 30px; display: flex; align-items: center; padding: 0 3px 0 6px; background: #fff; border: 1px solid #bbb8b4; border-radius: 3px; }
.urlbar i { width: 1px; height: 22px; background: #ccc; margin: 0 6px; }
.urlbar .ic { stroke: #777; stroke-width: 1.500; margin-left: 1px; }
.urlbar .ic ~ .ic { margin-right: 6px; }
.url { flex: 1; color: #8a8a8a; font-size: 15px; }
.url b { font-weight: normal; color: #222; }
.urlbar .url ~ .ic { margin-left: 6px; }
.exts { display: flex; padding-left: 6px; }
.exts button { width: 32px; height: 32px; }
.abp, .ub { font: bold 7px "Noto Sans", sans-serif; fill: #fff; stroke: none; text-anchor: middle; }
.hext { font: italic 14px "Liberation Serif", serif; fill: #e02020; stroke: none; text-anchor: middle; }
.yd { font: bold 13px "Noto Sans", sans-serif; fill: #777; stroke: none; text-anchor: middle; }
.menu { width: 42px; height: 34px; border-left: 1px solid #ddd; margin-left: 3px; }

/* PDF toolbar */
.pdfbar { display: grid; grid-template-columns: 1fr auto 1fr; align-items: center; height: 33px; flex: none; background: #f9f9fa; border-bottom: 1px solid #bbb; font-size: 12px; color: #222; }
.pdfbar > div { display: flex; align-items: center; }
.pdfbar button { width: 28px; height: 28px; }
.pdfbar i { width: 1px; height: 20px; background: #b5b5b5; }
.left .side { position: relative; margin: 0 33px 0 2px; }
.left .side svg { stroke-width: 1.500; }
.side em { position: absolute; right: 0; top: 0; width: 8px; height: 8px; border-radius: 50%; background: #5bd64b; }
.pageno { width: 56px; height: 26px; margin: 0 5px 0 1px; padding: 0 8px; text-align: right; font: inherit; border: 1px solid #b5b5b5; border-radius: 2px; background: #fff; color: #111; }
.zoom { position: relative; margin-left: 3px; }
.zoom select { appearance: none; width: 140px; height: 28px; padding: 0 7px; border: 0; border-radius: 2px; background: #d7d7db; font: inherit; color: #111; }
.zoom svg { position: absolute; right: 11px; top: 12px; width: 8px; height: 6px; }
.right { justify-content: flex-end; gap: 2px; padding-right: 3px; }
.right i { margin: 0 1px; }

/* document */
.viewer { flex: 1; min-height: 0; display: flex; background: #ebebed; }
.canvas { flex: 1; min-width: 0; overflow: hidden; display: flex; justify-content: center; }
.sheet { width: 1587px; max-width: 100%; margin: 0; background: #fff; box-shadow: 0 0 6px rgba(0, 0, 0, .3); }
.schematic { width: 100%; height: auto; }
figcaption { text-align: center; font: bold 24px/42px "DejaVu Sans", sans-serif; color: #000; }
.k, .n, .m, .b { fill: none; stroke-width: 8; stroke-linejoin: round; }
.k { stroke: #000; }
.n { stroke: #000084; }
.m { stroke: #800000; }
.b { stroke: #00f; }
.ic-body { fill: #ffffb0; stroke: #800000; stroke-width: 8; }
.dot { fill: #000084; }
.bdot { fill: #00f; }
.gap { fill: #ffffb0; }
.schematic text { font: bold 32px "Liberation Serif", serif; }
.schematic .ohm { font-size: 42px; }
.tn { fill: #00008b; }
.tm { fill: #800000; }
.tk { fill: #000; }
.end { text-anchor: end; }
.scroll { width: 15px; display: flex; flex-direction: column; align-items: center; padding: 5px 0; border-left: 1px solid #c5c3c0; background: linear-gradient(90deg, #f2f1ef, #fff); }
.scroll svg { width: 8px; height: 6px; fill: none; stroke: #555; stroke-width: 1.500; }
.track { flex: 1; width: 11px; }
.track b { display: block; height: 44px; margin-top: 315px; background: #87a556; border: 1px solid #76924a; }

/* find bar */
.findbar { height: 38px; flex: none; display: flex; align-items: center; gap: 18px; padding: 0 13px 0 8px; background: #f2f1ef; border-top: 1px solid #bbb; }
.findbox { display: flex; height: 24px; margin-right: -7px; border: 1px solid #c0bebb; border-radius: 2px; background: #fff; }
.findbox input { width: 203px; border: 0; padding: 0 6px; font: inherit; color: #3a3a3a; background: none; }
.findbox button { width: 27px; border-left: 1px solid #c0bebb; background: #f7f6f5; }
.findbar svg { width: 12px; height: 12px; fill: none; stroke: #444; stroke-width: 1.600; }
.findbar .opt { display: block; }
.count { color: #858585; }
.close { margin-left: auto; }

/* bottom panel */
.taskbar { height: 28px; flex: none; display: flex; align-items: center; }
.taskbar .grip { margin: 0 2px 0 4px; }
.tasks { flex: 1; min-width: 0; display: flex; height: 28px; }
.tasks button { flex: 1 1 0; min-width: 0; justify-content: flex-start; gap: 7px; padding: 0 4px; }
.tasks svg { width: 16px; height: 16px; }
.tasks .on { background: #2f2e2b; }
.spaces { display: flex; height: 28px; }
.spaces span { width: 50px; background: #2b2a28; border-right: 1px solid #45443f; display: flex; align-items: center; justify-content: center; }
.spaces .cur { background: #a9c284; border: 1px solid #fff; }
.pointer { position: absolute; left: 1330px; top: 611px; }
```
